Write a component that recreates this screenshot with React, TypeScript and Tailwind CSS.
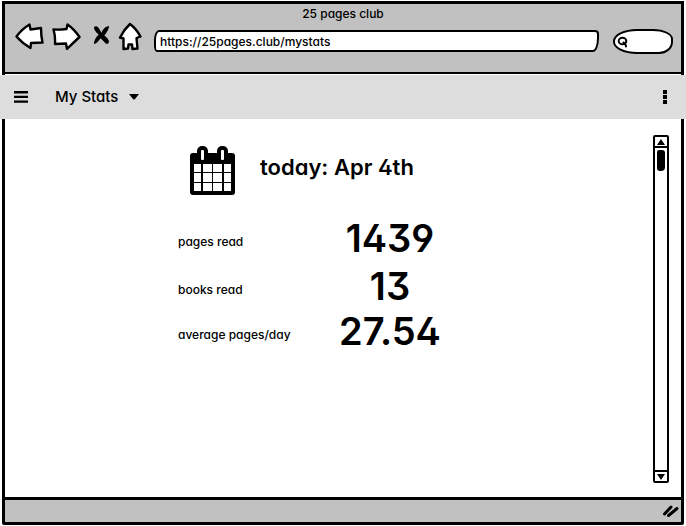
import React from "react";

const stats = [
  { id: "pages", label: "pages read", value: "1439", row: "h-12" },
  { id: "books", label: "books read", value: "13", row: "h-12" },
  { id: "average", label: "average pages/day", value: "27.54", row: "h-[42px]" },
];

function BrowserHeader() {
  return (
    <header className="mx-0.5 mt-px flex h-[74px] flex-col border-[3px] border-b-0 border-black bg-[#c1c1c1]">
      <h1 className="pt-0.5 text-center text-[12px] leading-4 font-medium">25 pages club</h1>
      <div className="flex flex-1 items-start pr-2 pl-2.5">
        <button type="button" aria-label="Back" className="mr-2 shrink-0 pt-px">
          <svg width="29" height="28" viewBox="0 0 29 28" fill="white" stroke="black" strokeWidth="2.4" strokeLinejoin="round">
            <path d="M1.5 13.5Q7 6 14.5 1.5L15.5 6.5 26 5Q26 13 27.5 19.5L16 20 15.5 25Q7 20 1.5 13.5Z" />
          </svg>
        </button>
        <button type="button" aria-label="Forward" className="mr-3 shrink-0 pt-px">
          <svg width="29" height="28" viewBox="0 0 29 28" fill="white" stroke="black" strokeWidth="2.4" strokeLinejoin="round">
            <path d="M1.5 6.5Q7 7 14.5 6L15.5 1.5Q22 6 27.5 14 21 20 15 26L14 20.5 3 21Q3.5 13 1.5 6.5Z" />
          </svg>
        </button>
        <button type="button" aria-label="Stop" className="mr-2 shrink-0 pt-[3px]">
          <svg width="17" height="21" viewBox="0 0 18 22" fill="black">
            <path d="M1 2Q4 0 6 3L9 8Q12 1 17 1 17 5 12 11 17 15 17 18 15 22 12 18L8 14Q4 20 1 20 1 15 6 10 1 6 1 2Z" />
          </svg>
        </button>
        <button type="button" aria-label="Home" className="mr-3 shrink-0">
          <svg width="24" height="29" viewBox="0 0 24 28" fill="white" stroke="black" strokeWidth="2.4" strokeLinejoin="round">
            <path d="M12 1.5Q18 6 22.5 14L18.5 15.5 19.5 26 14.5 26.5 14 22 10.5 22 10 26 5.5 26.5 5.5 16 2 15Q6 7 12 1.5Z" />
          </svg>
        </button>
        <input
          type="text"
          aria-label="Address"
          defaultValue="https://25pages.club/mystats"
          className="mt-2 h-[22px] min-w-0 flex-1 rounded-[5px_4px_6px_3px/10px_4px_14px_6px] border-2 border-black bg-white px-1 text-[12px] font-medium outline-none"
        />
        <label className="mt-[7px] ml-3.5 flex h-[25px] w-[60px] shrink-0 items-center rounded-[24px_20px_14px_24px/12px_10px_12px_12px] border-2 border-black bg-white pl-0.5">
          <svg className="shrink-0" width="12" height="12" viewBox="0 0 12 12" fill="none" stroke="black" strokeWidth="2" strokeLinecap="round">
            <ellipse cx="5.5" cy="5" rx="3.8" ry="3.3" />
            <path d="M6.5 6.5 8.5 8.5 9 10.5" />
          </svg>
          <input type="search" aria-label="Search" className="w-9 min-w-0 bg-transparent text-[12px] outline-none" />
        </label>
      </div>
      <div className="h-[3px] border-b border-white bg-black" />
    </header>
  );
}

function NavBar() {
  return (
    <nav className="flex h-11 items-center bg-[#dddddd] pr-[19px] pl-3.5">
      <button type="button" aria-label="Menu" className="w-3.5">
        <svg width="14" height="12" viewBox="0 0 14 12">
          <path d="M0 0h14v2.4H0zM0 4.7h14v2.4H0zM0 9.4h14v2.4H0z" />
        </svg>
      </button>
      <div className="ml-[27px] grid items-center">
        <select aria-label="Page" className="col-start-1 row-start-1 appearance-none bg-transparent pr-5 text-[15px] font-medium outline-none">
          <option>My Stats</option>
        </select>
        <svg className="pointer-events-none col-start-1 row-start-1 justify-self-end" width="10" height="6" viewBox="0 0 10 6">
          <path d="M0 0H10L6 5Q5 6 4 5Z" />
        </svg>
      </div>
      <button type="button" aria-label="More options" className="ml-auto flex w-[5px] flex-col items-center gap-px">
        <span className="size-1 bg-black" />
        <span className="size-1 bg-black" />
        <span className="size-1 bg-black" />
      </button>
    </nav>
  );
}

function CalendarIcon() {
  return (
    <svg className="shrink-0" width="46" height="50" viewBox="0 0 46 50" aria-hidden="true">
      <rect x="0" y="7" width="45" height="42" rx="3" />
      <rect x="7" y="0" width="11" height="17" rx="5" />
      <rect x="27" y="0" width="11" height="17" rx="5" />
      <g fill="white">
        <rect x="11" y="4" width="3" height="10" rx="1" />
        <rect x="31" y="4" width="3" height="10" rx="1" />
        <path d="M4 18h7v8H4zM13 18h9v8h-9zM23 18h9v8h-9zM34 18h7v8h-7zM4 27h7v9H4zM13 27h9v9h-9zM23 27h9v9h-9zM34 27h7v9h-7zM4 37h7v8H4zM13 37h9v8h-9zM23 37h9v8h-9zM34 37h7v8h-7z" />
      </g>
    </svg>
  );
}

function ScrollBar() {
  return (
    <div className="mt-4 mr-3 mb-3.5 flex w-4 shrink-0 flex-col rounded-[2px] border-2 border-black">
      <button type="button" aria-label="Scroll up" className="flex h-[11px] shrink-0 items-center justify-center border-b-2 border-black">
        <svg width="8" height="6" viewBox="0 0 8 6"><path d="M4 0 8 6H0Z" /></svg>
      </button>
      <div className="flex flex-1 justify-center pt-0.5">
        <div className="h-[21px] w-2 rounded-[2px_3px_4px_3px] bg-black" />
      </div>
      <button type="button" aria-label="Scroll down" className="flex h-[11px] shrink-0 items-center justify-center border-t-2 border-black">
        <svg width="8" height="6" viewBox="0 0 8 6"><path d="M0 0H8L4 6Z" /></svg>
      </button>
    </div>
  );
}

export default function App() {
  return (
    <div className="flex min-h-screen flex-col bg-white font-['Inter','Noto_Sans',sans-serif] text-black [font-feature-settings:'cv11','ss01']">
      <BrowserHeader />
      <NavBar />
      <main className="mx-0.5 flex flex-1 border-x-[3px] border-black">
        <div className="flex-1 pt-[27px] pr-8">
          <section className="mx-auto w-[270px]">
            <div className="flex items-center gap-6 pl-3">
              <CalendarIcon />
              <h2 className="pb-2 text-[22px] leading-7 font-semibold whitespace-nowrap">today: Apr 4th</h2>
            </div>
            <table className="mt-4 w-full">
              <tbody>
                {stats.map((stat) => (
                  <tr key={stat.id} className={stat.row}>
                    <th scope="row" className="pt-3 text-left text-[12px] leading-4 font-medium whitespace-nowrap">{stat.label}</th>
                    <td className="w-[116px] pt-1 text-center text-[38px] leading-9 font-semibold">{stat.value}</td>
                  </tr>
                ))}
              </tbody>
            </table>
          </section>
        </div>
        <ScrollBar />
      </main>
      <footer className="mx-0.5 mb-px flex h-7 items-center justify-end rounded-b-[2px] border-[3px] border-black bg-[#c1c1c1] pr-0.5">
        <svg width="16" height="12" viewBox="0 0 16 12" fill="none" stroke="black" strokeWidth="3" strokeLinecap="round" aria-hidden="true">
          <path d="M1.5 9 8 2M5.5 10.5 14 3.5" />
        </svg>
      </footer>
    </div>
  );
}
